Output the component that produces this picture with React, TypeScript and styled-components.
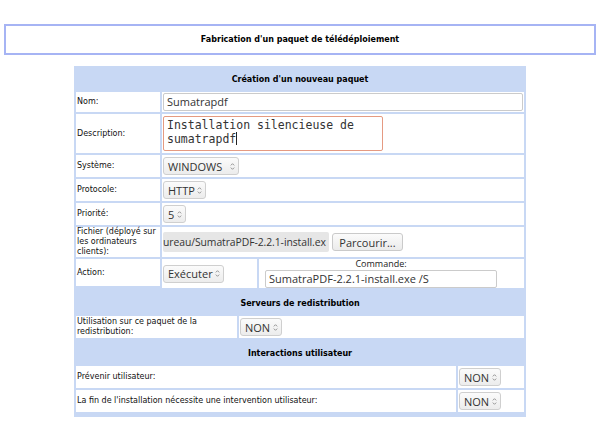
import React from "react";
import styled, { createGlobalStyle } from "styled-components";

const Global = createGlobalStyle`
  html, body { margin: 0; padding: 0; background: #fff; }
  body { font-family: "DejaVu Sans", Verdana, sans-serif; color: #111; }
`;

const BLUE = "#c8d8f4";

const Page = styled.div`
  padding-top: 24px;
  width: 600px;
`;

const TitleBox = styled.div`
  margin: 0 4px;
  height: 27px;
  border: 2px solid #a6b4f4;
  display: flex;
  align-items: center;
  justify-content: center;
  font-size: 8px;
  font-weight: bold;
  color: #000;
`;

const Form = styled.div`
  width: 452px;
  margin: 11px auto 0;
  display: flex;
  flex-direction: column;
`;

const Section = styled.div<{ $cols: string; $padBottom?: number }>`
  display: grid;
  grid-template-columns: ${(p) => p.$cols};
  gap: 2px;
  padding: 2px 2px ${(p) => p.$padBottom ?? 2}px;
  background: ${BLUE};
`;

const Header = styled.div`
  grid-column: 1 / -1;
  height: 22px;
  display: flex;
  align-items: center;
  justify-content: center;
  font-size: 8px;
  font-weight: bold;
  color: #000;
`;

const Label = styled.div<{ $h: number }>`
  background: #fff;
  height: ${(p) => p.$h}px;
  padding: 0 1px;
  display: flex;
  align-items: center;
  font-size: 8px;
  line-height: 10px;
  color: #111;
`;

const Value = styled.div<{ $span?: number }>`
  background: #fff;
  grid-column: span ${(p) => p.$span ?? 1};
  padding: 0 1px;
  display: flex;
  align-items: center;
  gap: 3px;
`;

const TextInput = styled.div<{ $w?: number }>`
  box-sizing: border-box;
  width: ${(p) => (p.$w ? `${p.$w}px` : "100%")};
  height: 18px;
  border: 1px solid #cbcbcb;
  border-radius: 2px;
  padding: 0 3px;
  font-family: "Open Sans", sans-serif;
  font-size: 11px;
  line-height: 16px;
  color: #333;
  background: #fff;
  white-space: nowrap;
  overflow: hidden;
`;

const TextArea = styled.div`
  box-sizing: border-box;
  width: 220px;
  height: 35px;
  border: 1px solid #e59a82;
  border-radius: 2px;
  padding: 1px 3px;
  font-family: "DejaVu Sans Mono", monospace;
  font-size: 11.5px;
  line-height: 14px;
  color: #333;
`;

const Caret = styled.span`
  display: inline-block;
  width: 1px;
  height: 13px;
  background: #222;
  vertical-align: -2px;
`;

const SelectBox = styled.div<{ $w: number }>`
  box-sizing: border-box;
  width: ${(p) => p.$w}px;
  height: 18px;
  border: 1px solid #cfcfcf;
  border-radius: 3px;
  background: linear-gradient(#fbfbfb, #ececec);
  display: flex;
  align-items: center;
  justify-content: space-between;
  padding: 0 3px 0 4px;
  font-family: "Open Sans", sans-serif;
  font-size: 11px;
  color: #333;
`;

const FileField = styled.div`
  box-sizing: border-box;
  width: 166px;
  height: 20px;
  border-radius: 2px;
  background: #e6e6e6;
  font-family: "Open Sans", sans-serif;
  font-size: 10.4px;
  letter-spacing: -0.08px;
  line-height: 20px;
  color: #333;
  white-space: nowrap;
  overflow: hidden;
`;

const Button = styled.div`
  box-sizing: border-box;
  width: 71px;
  height: 18px;
  border: 1px solid #cacaca;
  border-radius: 3px;
  background: linear-gradient(#fbfbfb, #ebebeb);
  display: flex;
  align-items: center;
  justify-content: center;
  font-family: "Open Sans", sans-serif;
  font-size: 11px;
  color: #333;
`;

const CommandCell = styled.div`
  background: #fff;
  padding: 0 0 0 6px;
  display: flex;
  align-items: flex-end;
`;

const CommandGroup = styled.div`
  width: 232px;
  display: flex;
  flex-direction: column;
  align-items: center;
  gap: 1px;
`;

const SmallLabel = styled.div`
  font-family: "Open Sans", sans-serif;
  font-size: 9px;
  line-height: 10px;
  color: #222;
`;

const Arrows = () => (
  <svg width="5" height="9" viewBox="0 0 5 9">
    <path d="M0.8 3.4 L2.5 1.7 L4.2 3.4 M0.8 5.6 L2.5 7.3 L4.2 5.6" fill="none" stroke="#8a8a8a" strokeWidth="0.9" />
  </svg>
);

const Select = ({ w, value }: { w: number; value: string }) => (
  <SelectBox $w={w}>
    <span>{value}</span>
    <Arrows />
  </SelectBox>
);

export default function App() {
  return (
    <Page>
      <Global />
      <TitleBox>Fabrication d'un paquet de télédéploiement</TitleBox>
      <Form>
        <Section $cols="84px 95px 1fr">
          <Header>Création d'un nouveau paquet</Header>

          <Label $h={20}>Nom:</Label>
          <Value $span={2}>
            <TextInput>Sumatrapdf</TextInput>
          </Value>

          <Label $h={39}>Description:</Label>
          <Value $span={2}>
            <TextArea>
              Installation silencieuse de sumatrapdf
              <Caret />
            </TextArea>
          </Value>

          <Label $h={22}>Système:</Label>
          <Value $span={2}>
            <Select w={76} value="WINDOWS" />
          </Value>

          <Label $h={22}>Protocole:</Label>
          <Value $span={2}>
            <Select w={43} value="HTTP" />
          </Value>

          <Label $h={22}>Priorité:</Label>
          <Value $span={2}>
            <Select w={23} value="5" />
          </Value>

          <Label $h={30}>Fichier (déployé sur les ordinateurs clients):</Label>
          <Value $span={2}>
            <FileField>ureau/SumatraPDF-2.2.1-install.ex</FileField>
            <Button>Parcourir...</Button>
          </Value>

          <Label $h={27}>Action:</Label>
          <Value>
            <Select w={61} value="Exécuter" />
          </Value>
          <CommandCell>
            <CommandGroup>
              <SmallLabel>Commande:</SmallLabel>
              <TextInput $w={232}>SumatraPDF-2.2.1-install.exe /S</TextInput>
            </CommandGroup>
          </CommandCell>
        </Section>

        <Section $cols="161px 1fr">
          <Header>Serveurs de redistribution</Header>
          <Label $h={22}>Utilisation sur ce paquet de la redistribution:</Label>
          <Value>
            <Select w={42} value="NON" />
          </Value>
        </Section>

        <Section $cols="380px 1fr" $padBottom={5}>
          <Header>Interactions utilisateur</Header>
          <Label $h={22}>Prévenir utilisateur:</Label>
          <Value>
            <Select w={42} value="NON" />
          </Value>
          <Label $h={22}>La fin de l'installation nécessite une intervention utilisateur:</Label>
          <Value>
            <Select w={42} value="NON" />
          </Value>
        </Section>
      </Form>
    </Page>
  );
}
